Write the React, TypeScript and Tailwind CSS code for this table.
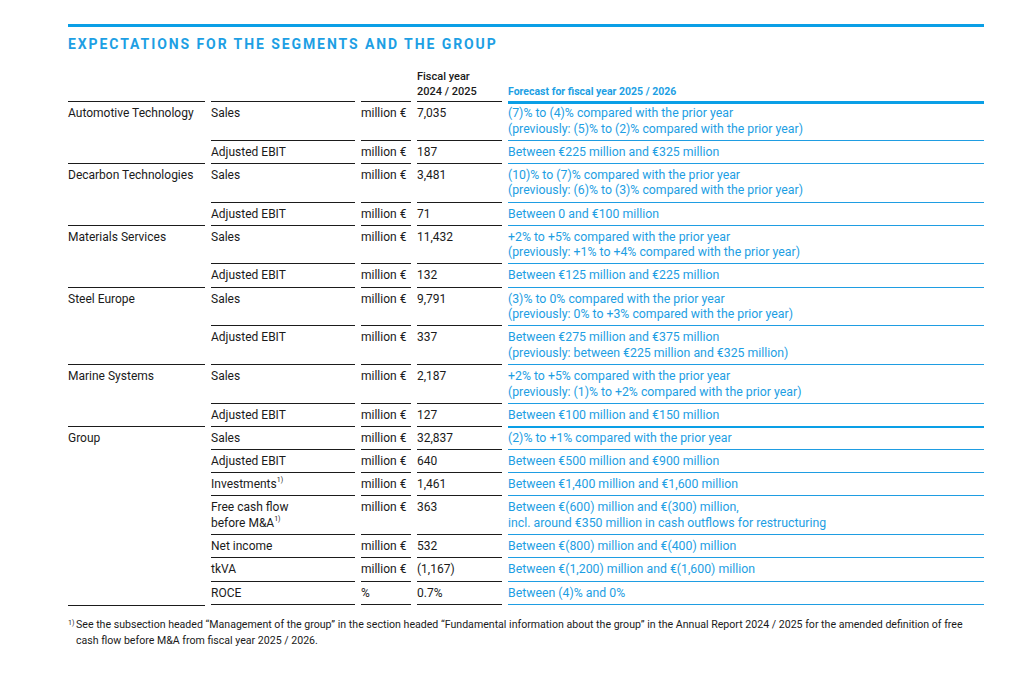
import React from "react";

type Row = {
  label: React.ReactNode;
  unit: string;
  value: string;
  forecast: string[];
};

type Segment = {
  name: string;
  rows: Row[];
};

const Sup = () => <sup className="text-[7px] relative -top-[1px] align-super">1)</sup>;

const segments: Segment[] = [
  {
    name: "Automotive Technology",
    rows: [
      {
        label: "Sales",
        unit: "million €",
        value: "7,035",
        forecast: [
          "(7)% to (4)% compared with the prior year",
          "(previously: (5)% to (2)% compared with the prior year)",
        ],
      },
      {
        label: "Adjusted EBIT",
        unit: "million €",
        value: "187",
        forecast: ["Between €225 million and €325 million"],
      },
    ],
  },
  {
    name: "Decarbon Technologies",
    rows: [
      {
        label: "Sales",
        unit: "million €",
        value: "3,481",
        forecast: [
          "(10)% to (7)% compared with the prior year",
          "(previously: (6)% to (3)% compared with the prior year)",
        ],
      },
      {
        label: "Adjusted EBIT",
        unit: "million €",
        value: "71",
        forecast: ["Between 0 and €100 million"],
      },
    ],
  },
  {
    name: "Materials Services",
    rows: [
      {
        label: "Sales",
        unit: "million €",
        value: "11,432",
        forecast: [
          "+2% to +5% compared with the prior year",
          "(previously: +1% to +4% compared with the prior year)",
        ],
      },
      {
        label: "Adjusted EBIT",
        unit: "million €",
        value: "132",
        forecast: ["Between €125 million and €225 million"],
      },
    ],
  },
  {
    name: "Steel Europe",
    rows: [
      {
        label: "Sales",
        unit: "million €",
        value: "9,791",
        forecast: [
          "(3)% to 0% compared with the prior year",
          "(previously: 0% to +3% compared with the prior year)",
        ],
      },
      {
        label: "Adjusted EBIT",
        unit: "million €",
        value: "337",
        forecast: [
          "Between €275 million and €375 million",
          "(previously: between €225 million and €325 million)",
        ],
      },
    ],
  },
  {
    name: "Marine Systems",
    rows: [
      {
        label: "Sales",
        unit: "million €",
        value: "2,187",
        forecast: [
          "+2% to +5% compared with the prior year",
          "(previously: (1)% to +2% compared with the prior year)",
        ],
      },
      {
        label: "Adjusted EBIT",
        unit: "million €",
        value: "127",
        forecast: ["Between €100 million and €150 million"],
      },
    ],
  },
  {
    name: "Group",
    rows: [
      {
        label: "Sales",
        unit: "million €",
        value: "32,837",
        forecast: ["(2)% to +1% compared with the prior year"],
      },
      {
        label: "Adjusted EBIT",
        unit: "million €",
        value: "640",
        forecast: ["Between €500 million and €900 million"],
      },
      {
        label: (
          <>
            Investments
            <Sup />
          </>
        ),
        unit: "million €",
        value: "1,461",
        forecast: ["Between €1,400 million and €1,600 million"],
      },
      {
        label: (
          <>
            Free cash flow
            <br />
            before M&amp;A
            <Sup />
          </>
        ),
        unit: "million €",
        value: "363",
        forecast: [
          "Between €(600) million and €(300) million,",
          "incl. around €350 million in cash outflows for restructuring",
        ],
      },
      {
        label: "Net income",
        unit: "million €",
        value: "532",
        forecast: ["Between €(800) million and €(400) million"],
      },
      {
        label: "tkVA",
        unit: "million €",
        value: "(1,167)",
        forecast: ["Between €(1,200) million and €(1,600) million"],
      },
      {
        label: "ROCE",
        unit: "%",
        value: "0.7%",
        forecast: ["Between (4)% and 0%"],
      },
    ],
  },
];

export default function App() {
  const cell = "align-top border-t border-[#1b1b1b] pt-[4px] pb-[2.7px]";

  return (
    <div
      className="w-[1016px] min-h-[677px] bg-white pt-[24px] text-[#1a1a1a]"
      style={{ fontFamily: "Roboto, 'Liberation Sans', sans-serif" }}
    >
      <div className="ml-[68px] w-[916px]">
        <div className="h-[3px] bg-[#0a9fe6]" />
        <h1 className="mt-[9px] text-[14px] leading-[17px] font-bold tracking-[0.137em] text-[#1d9fe4]">
          EXPECTATIONS FOR THE SEGMENTS AND THE GROUP
        </h1>

        <div className="mt-[16px] -mx-[6px]">
          <table className="w-[928px] table-fixed border-separate border-spacing-x-[6px] border-spacing-y-0 text-[12px] leading-[15.5px]">
            <colgroup>
              <col className="w-[137px]" />
              <col className="w-[144px]" />
              <col className="w-[50px]" />
              <col className="w-[85px]" />
              <col />
            </colgroup>
            <thead>
              <tr>
                <th />
                <th />
                <th />
                <th className="align-bottom pb-[2px] text-left text-[11px] leading-[15px] font-medium">
                  Fiscal year
                  <br />
                  2024 / 2025
                </th>
                <th className="align-bottom pb-[3px] text-left text-[10.5px] leading-[13px] font-bold text-[#1d9fe4]">
                  Forecast for fiscal year 2025 / 2026
                </th>
              </tr>
            </thead>
            <tbody>
              {segments.map((seg, si) =>
                seg.rows.map((row, ri) => {
                  const isLast = si === segments.length - 1 && ri === seg.rows.length - 1;
                  const bottom = isLast ? " border-b" : "";
                  let blue = "border-t border-[#1f9de2] pt-[4px]";
                  if (si === 0 && ri === 0) blue = "border-t-[3px] border-[#0a9fe6] pt-[2px]";
                  else if (si === segments.length - 1 && ri === 0)
                    blue = "border-t-2 border-[#0a9fe6] pt-[3px]";
                  return (
                    <tr key={`${si}-${ri}`}>
                      {ri === 0 && (
                        <td rowSpan={seg.rows.length} className={cell}>
                          {seg.name}
                        </td>
                      )}
                      <td className={cell + bottom}>{row.label}</td>
                      <td className={cell + bottom + " whitespace-nowrap"}>{row.unit}</td>
                      <td className={cell + bottom}>{row.value}</td>
                      <td
                        className={`align-top pb-[2.7px] text-[12.3px] text-[#1d9ee3] ${blue}${
                          isLast ? " border-b border-b-[#1f9de2]" : ""
                        }`}
                      >
                        {row.forecast.map((f, fi) => (
                          <div key={fi}>{f}</div>
                        ))}
                      </td>
                    </tr>
                  );
                })
              )}
              <tr>
                <td className="h-0 border-t border-[#1b1b1b] p-0" />
                <td className="h-0 p-0" />
                <td className="h-0 p-0" />
                <td className="h-0 p-0" />
                <td className="h-0 p-0" />
              </tr>
            </tbody>
          </table>
        </div>

        <div className="mt-[11px] flex text-[10.6px] leading-[16px]">
          <span className="w-[8px] shrink-0 text-[7px] leading-[12px]">1)</span>
          <p>
            See the subsection headed “Management of the group” in the section headed “Fundamental
            information about the group” in the Annual Report 2024 / 2025 for the amended definition of free
            cash flow before M&amp;A from fiscal year 2025 / 2026.
          </p>
        </div>
      </div>
    </div>
  );
}
